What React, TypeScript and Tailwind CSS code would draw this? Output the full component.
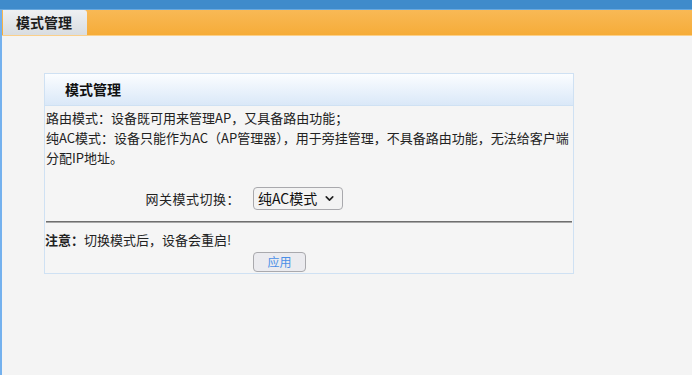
import { ChevronDown } from 'lucide-react';

const FONT = { fontFamily: '"Microsoft YaHei", "Noto Sans CJK SC", "Noto Sans", sans-serif' };

export default function App() {
  return (
    <div className="w-[692px] h-[375px] bg-[#f4f4f4] flex flex-col overflow-hidden text-[#222]" style={FONT}>
      {/* top strip */}
      <div className="h-[9px] bg-[#3f8bcb] shrink-0" />
      <div className="h-px bg-[#6aa9de] shrink-0" />

      <div className="flex-1 flex flex-col border-l-2 border-[#74b1ee]">
        {/* tab bar */}
        <div className="h-[26px] flex items-stretch bg-gradient-to-b from-[#f8b955] to-[#f6ac38] border-b border-[#fbd08a] shrink-0">
          <div className="ml-px w-[84px] rounded-tr-[3px] bg-gradient-to-b from-[#eef0f2] to-[#d9dde1] flex items-center pl-[13px] text-[14px] font-bold text-[#1d1d1d]">
            模式管理
          </div>
        </div>

        {/* panel */}
        <div className="ml-[42px] mt-[37px] w-[530px] h-[201px] border border-[#cfe1f3] bg-[#f5f5f5] flex flex-col">
          <div className="h-[32px] bg-gradient-to-b from-[#fbfdff] to-[#dae8f8] border-b border-[#cfe1f3] flex items-center pl-[20px] text-[14px] font-bold text-[#111]">
            模式管理
          </div>

          <div className="px-[1px] pt-[2px] text-[13px] leading-[20px] text-[#222]">
            <p className="whitespace-nowrap">路由模式：设备既可用来管理AP，又具备路由功能；</p>
            <p className="leading-[19.5px]">
              <span className="whitespace-nowrap">纯AC模式：设备只能作为AC（AP管理器），用于旁挂管理，不具备路由功能，无法给客户端</span>
              <br />
              分配IP地址。
            </p>
          </div>

          <div className="mt-[20px] flex items-center">
            <div className="w-[195px] text-right text-[13px] tracking-[0.5px] text-[#222]">网关模式切换：</div>
            <div className="ml-[13px] w-[90px] h-[23px] rounded-[4px] border border-[#a9a9ad] bg-[#f3f3f3] flex items-center justify-between pl-[4px] pr-[6px] text-[14px] text-[#111]">
              <span>纯AC模式</span>
              <ChevronDown size={13} strokeWidth={3} className="text-[#222]" />
            </div>
          </div>

          <div className="mx-[1px] mt-[11px] h-[2px] bg-[#6f6f6f] border-b border-[#a8a8a8]" />

          <div className="mt-[8px] text-[13px] leading-[18px] text-[#222]">
            <span className="font-bold">注意：</span>切换模式后，设备会重启!
          </div>

          <div className="mt-[3px] ml-[208px] w-[53px] h-[20px] rounded-[4px] border border-[#a9a9ad] bg-[#ebebef] flex items-center justify-center text-[12px] text-[#4a8fe7]">
            应用
          </div>
        </div>
      </div>
    </div>
  );
}
